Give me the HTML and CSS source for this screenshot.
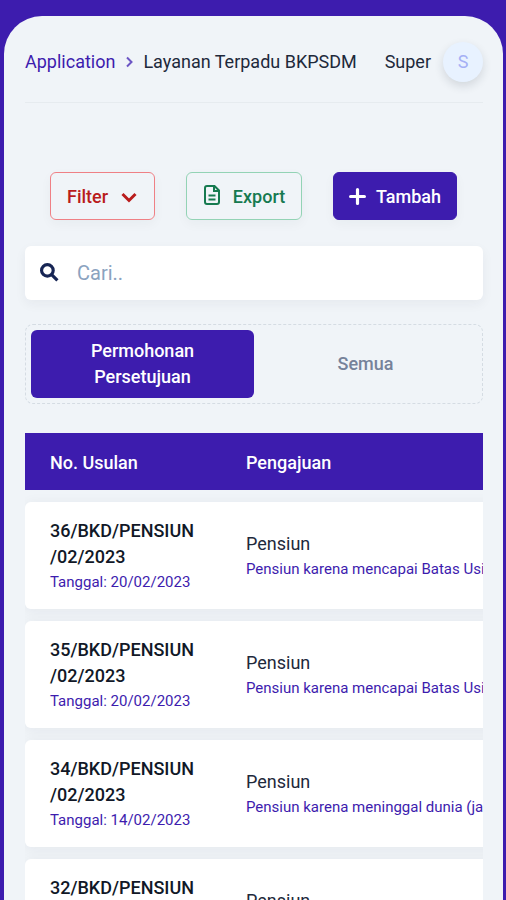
FILE: index.html
```html
<!DOCTYPE html>
<html lang="id">
<head>
<meta charset="utf-8">
<meta name="viewport" content="width=device-width, initial-scale=1">
<title>Layanan Terpadu BKPSDM</title>
<link rel="stylesheet" href="styles.css">
</head>
<body>
<main class="panel">
  <header class="topbar">
    <nav class="breadcrumb" aria-label="Breadcrumb">
      <a class="crumb-link" href="#">Application</a>
      <svg class="crumb-icon" viewBox="0 0 12 12" aria-hidden="true"><path d="M4 1.500 8.500 6 4 10.500"/></svg>
      <span>Layanan Terpadu BKPSDM</span>
    </nav>
    <div class="user">
      <span>Super</span>
      <button class="avatar" type="button">S</button>
    </div>
  </header>

  <div class="actions">
    <button class="btn btn-danger" type="button">Filter
      <svg class="icon icon-chevron" viewBox="0 0 16 16" aria-hidden="true"><path d="m1.500 5 6.500 6.500L14.500 5"/></svg>
    </button>
    <button class="btn btn-success" type="button">
      <svg class="icon icon-file" viewBox="0 0 16 20" aria-hidden="true"><path d="M3 1h7.500L15 5.500V17a2 2 0 0 1-2 2H3a2 2 0 0 1-2-2V3a2 2 0 0 1 2-2z"/><path d="M10 1v5h5M4.500 10.500h7M4.500 14.500h7"/></svg>
      Export
    </button>
    <button class="btn btn-primary" type="button">
      <svg class="icon icon-plus" viewBox="0 0 16 16" aria-hidden="true"><path d="M8 1.500v13M1.500 8h13"/></svg>
      Tambah
    </button>
  </div>

  <label class="search">
    <svg class="icon-search" viewBox="0 0 18 18" aria-hidden="true"><circle cx="7" cy="7" r="5.500"/><path d="m11 11 5.500 5.500"/></svg>
    <input class="search-input" type="search" placeholder="Cari.." aria-label="Cari">
  </label>

  <div class="tabs">
    <button class="tab tab-active" type="button">Permohonan Persetujuan</button>
    <button class="tab" type="button">Semua</button>
  </div>

  <div class="table-scroll">
    <table class="table">
      <thead>
        <tr><th class="col-number" scope="col">No. Usulan</th><th scope="col">Pengajuan</th></tr>
      </thead>
      <tbody>
        <tr>
          <td><a class="number" href="#">36/BKD/PENSIUN<br>/02/2023</a><span class="note">Tanggal: 20/02/2023</span></td>
          <td><span class="kind">Pensiun</span><span class="note">Pensiun karena mencapai Batas Usia</span></td>
        </tr>
        <tr>
          <td><a class="number" href="#">35/BKD/PENSIUN<br>/02/2023</a><span class="note">Tanggal: 20/02/2023</span></td>
          <td><span class="kind">Pensiun</span><span class="note">Pensiun karena mencapai Batas Usia</span></td>
        </tr>
        <tr>
          <td><a class="number" href="#">34/BKD/PENSIUN<br>/02/2023</a><span class="note">Tanggal: 14/02/2023</span></td>
          <td><span class="kind">Pensiun</span><span class="note">Pensiun karena meninggal dunia (janda)</span></td>
        </tr>
        <tr>
          <td><a class="number" href="#">32/BKD/PENSIUN<br>/02/2023</a><span class="note">Tanggal: 14/02/2023</span></td>
          <td><span class="kind">Pensiun</span><span class="note">Pensiun karena meninggal dunia (janda)</span></td>
        </tr>
      </tbody>
    </table>
  </div>
</main>
</body>
</html>
```
FILE: styles.css
```css
:root {
  --primary: #3d1cae;
  --surface: #f0f4f8;
  --ink: #1e293b;
}

* {
  box-sizing: border-box;
}

body {
  display: flex;
  height: 100vh;
  margin: 0;
  padding: 16px 3px 0 4px;
  background: var(--primary);
  color: var(--ink);
  font: 18px/26px Roboto, "Liberation Sans", sans-serif;
}

a {
  color: inherit;
  text-decoration: none;
}

button,
input {
  font: inherit;
}

.panel {
  flex: 1;
  min-width: 0;
  padding: 0 20px 0 21px;
  overflow-x: hidden;
  overflow-y: auto;
  scrollbar-width: none;
  border-radius: 38px 38px 0 0;
  background: var(--surface);
}

.topbar {
  display: flex;
  align-items: center;
  justify-content: space-between;
  height: 87px;
  padding-top: 6px;
  border-bottom: 1px solid #e6ebef;
  white-space: nowrap;
}

.breadcrumb,
.user {
  display: flex;
  align-items: center;
}

.breadcrumb {
  gap: 8px;
}

.user {
  gap: 12px;
}

.crumb-link {
  color: var(--primary);
}

.crumb-icon {
  width: 12px;
  height: 12px;
  fill: none;
  stroke: #6c55c4;
  stroke-width: 2;
}

.avatar {
  width: 40px;
  height: 40px;
  padding: 0;
  border: 0;
  border-radius: 50%;
  background: #e8f2ff;
  box-shadow: 0 4px 10px rgb(30 41 59 / 14%);
  color: #a5b0f5;
}

.actions {
  display: flex;
  justify-content: space-between;
  margin: 69px 26px 26px 25px;
}

.btn {
  display: flex;
  align-items: center;
  justify-content: center;
  gap: 10px;
  height: 48px;
  padding: 1px 16px 0;
  border: 1px solid;
  border-radius: 6px;
  background: transparent;
  box-shadow: 0 4px 12px rgb(30 41 59 / 4%);
  font-weight: 500;
}

.btn-danger {
  gap: 12px;
  border-color: #ef8085;
  color: #b91c1c;
}

.btn-success {
  gap: 12px;
  border-color: #93d3b5;
  color: #167a50;
}

.btn-primary {
  padding: 1px 15px 0;
  border-color: var(--primary);
  background: var(--primary);
  color: #fff;
}

.icon {
  fill: none;
  stroke: currentColor;
  stroke-width: 2;
}

.icon-chevron {
  width: 18px;
  height: 16px;
  stroke-width: 3;
}

.icon-file {
  width: 18px;
  height: 20px;
  margin-bottom: 4px;
}

.icon-plus {
  width: 17px;
  height: 17px;
  stroke-width: 3;
  stroke-linecap: round;
}

.search {
  display: flex;
  align-items: center;
  gap: 18px;
  height: 54px;
  padding: 0 15px;
  border-radius: 6px;
  background: #fff;
  box-shadow: 0 4px 12px rgb(30 41 59 / 5%);
}

.icon-search {
  flex: none;
  width: 19px;
  height: 19px;
  margin-bottom: 2px;
  fill: none;
  stroke: #172554;
  stroke-width: 3;
}

.search-input {
  flex: 1;
  min-width: 0;
  padding: 0;
  border: 0;
  outline: 0;
  background: transparent;
  color: var(--ink);
  font-size: 20px;
}

.search-input::placeholder {
  color: #8ba3bf;
}

.tabs {
  display: grid;
  grid-template-columns: 1fr 1fr;
  margin: 24px 0 28px;
  padding: 5px;
  border: 1px dashed #d5dce3;
  border-radius: 8px;
}

.tab {
  height: 68px;
  padding: 0 48px;
  border: 0;
  border-radius: 6px;
  background: transparent;
  color: #76829a;
  font-weight: 500;
}

.tab-active {
  background: var(--primary);
  color: #fff;
}

.table-scroll {
  overflow-x: auto;
  scrollbar-width: none;
}

.table {
  width: 600px;
  margin-top: -11px;
  border-spacing: 0 12px;
  table-layout: fixed;
}

.table th {
  height: 57px;
  padding: 2px 25px 0;
  background: var(--primary);
  color: #fff;
  font-weight: 500;
  text-align: left;
}

.table .col-number {
  width: 196px;
}

.table tbody tr {
  border-radius: 6px;
  box-shadow: 0 2px 14px rgb(30 41 59 / 6%);
}

.table td {
  height: 107px;
  padding: 16px 25px 14px;
  background: #fff;
  white-space: nowrap;
}

.table td:first-child {
  border-radius: 6px 0 0 6px;
}

.number,
.kind,
.note {
  display: block;
}

.number {
  color: #111827;
  font-weight: 500;
}

.note {
  color: var(--primary);
  font-size: 15px;
  line-height: 25px;
}
```
